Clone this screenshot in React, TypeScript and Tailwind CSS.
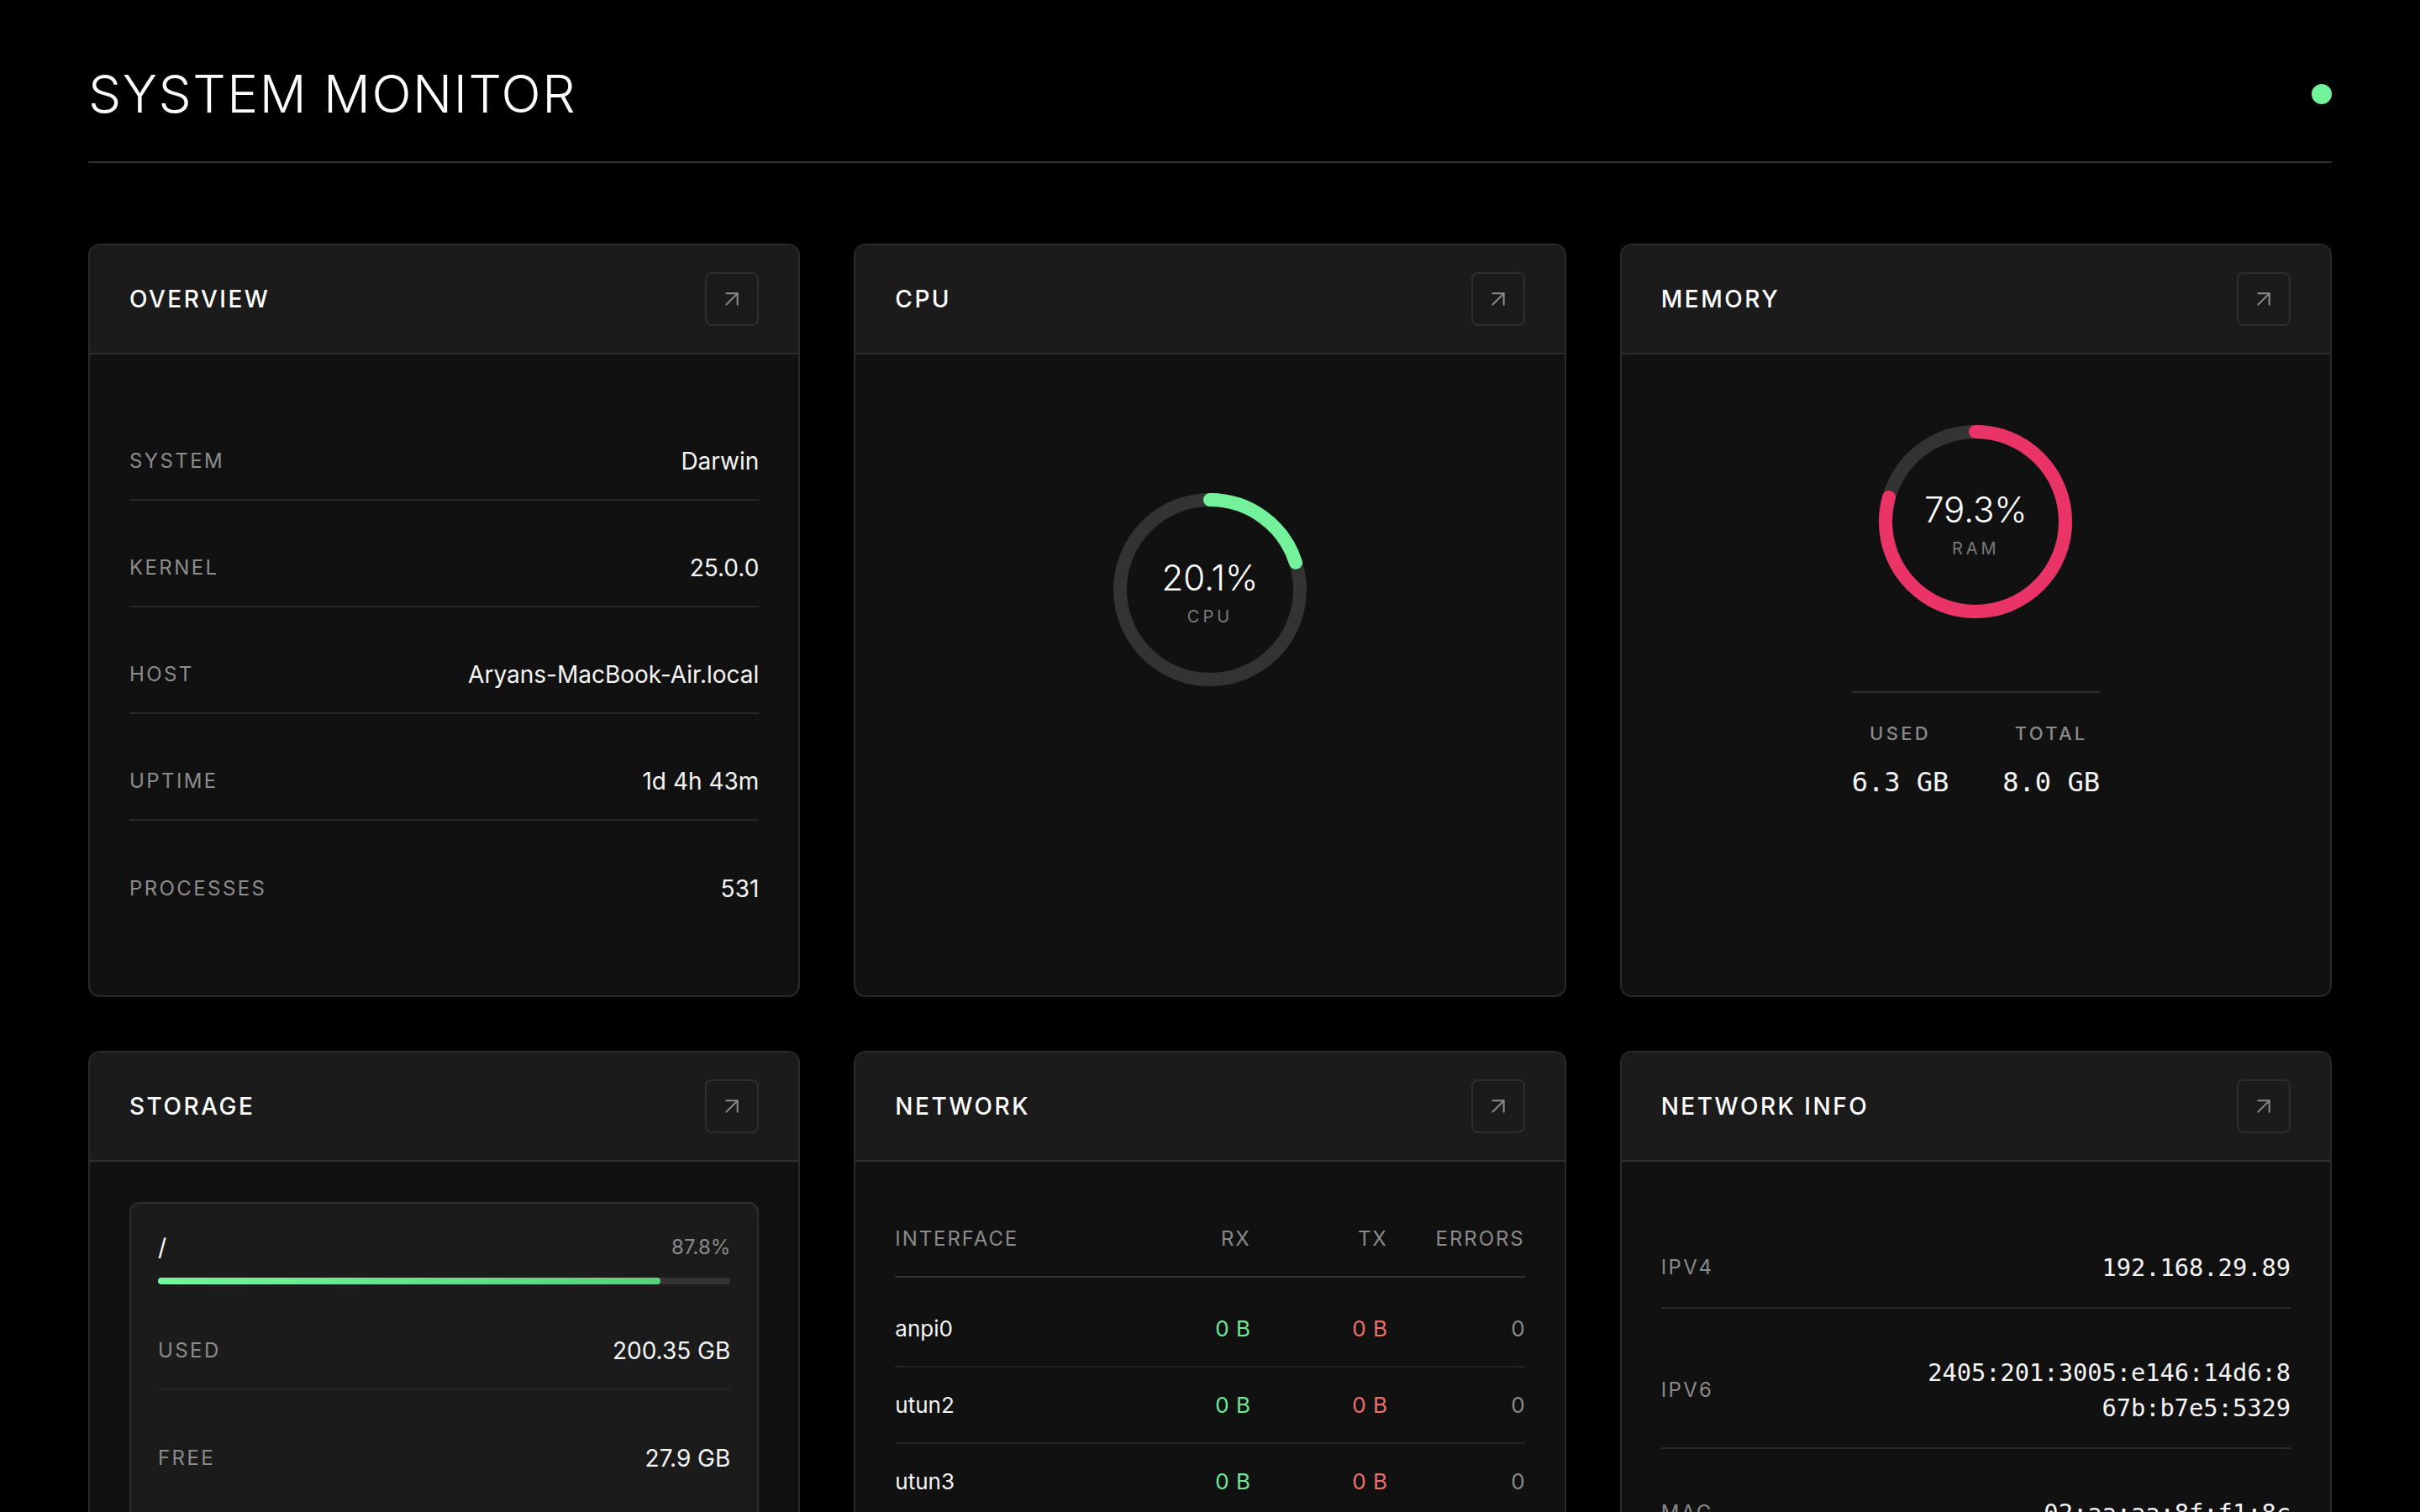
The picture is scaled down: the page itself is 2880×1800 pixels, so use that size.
import React from "react";
import { ArrowUpRight } from "lucide-react";

const SANS = "font-['Inter','Noto_Sans','Liberation_Sans',sans-serif]";
const MONO = "font-['DejaVu_Sans_Mono','Liberation_Mono',monospace]";

function Card({ title, children }: { title: string; children: React.ReactNode }) {
  return (
    <div className="flex flex-col rounded-[14px] border-2 border-[#2a2a2a] bg-[#111111] overflow-hidden">
      <div className="flex h-[130px] shrink-0 items-center justify-between border-b-2 border-[#2e2e2e] bg-[#1b1b1b] px-[47px]">
        <h2 className="text-[28px] font-medium tracking-[0.09em] text-white leading-[40px]">{title}</h2>
        <button className="flex h-16 w-16 items-center justify-center rounded-[8px] border-2 border-[#2e2e2e] bg-[#1b1b1b] text-[#8c8c8c]">
          <ArrowUpRight size={32} strokeWidth={1.5} />
        </button>
      </div>
      {children}
    </div>
  );
}

function Gauge({ pct, label, color }: { pct: number; label: string; color: string }) {
  const size = 230;
  const sw = 16;
  const r = (size - sw) / 2;
  const c = 2 * Math.PI * r;
  return (
    <div className="relative h-[230px] w-[230px]">
      <svg width={size} height={size} viewBox={`0 0 ${size} ${size}`}>
        <circle cx={size / 2} cy={size / 2} r={r} fill="none" stroke="#333333" strokeWidth={sw} />
        <circle
          cx={size / 2}
          cy={size / 2}
          r={r}
          fill="none"
          stroke={color}
          strokeWidth={sw}
          strokeLinecap="round"
          strokeDasharray={`${(c * pct) / 100} ${c}`}
          transform={`rotate(-90 ${size / 2} ${size / 2})`}
        />
      </svg>
      <div className="absolute inset-0 flex flex-col items-center justify-center pt-[6px]">
        <div className="text-[42px] font-light leading-[48px] text-white">{pct.toFixed(1)}%</div>
        <div className="mt-[10px] text-[20px] leading-[24px] tracking-[0.2em] text-[#7a7a7a]">{label}</div>
      </div>
    </div>
  );
}

function KV({ k, v, last = false }: { k: string; v: string; last?: boolean }) {
  return (
    <div className={`flex h-[92px] items-center justify-between ${last ? "" : "border-b-2 border-[#262626]"}`}>
      <span className="text-[24px] leading-[40px] tracking-[0.1em] text-[#8c8c8c]">{k}</span>
      <span className="text-[28px] leading-[40px] text-[#f5f5f5]">{v}</span>
    </div>
  );
}

const nets = [
  { n: "anpi0", rx: "0 B", tx: "0 B", e: "0" },
  { n: "utun2", rx: "0 B", tx: "0 B", e: "0" },
  { n: "utun3", rx: "0 B", tx: "0 B", e: "0" },
  { n: "utun0", rx: "0 B", tx: "0 B", e: "0" },
  { n: "en0", rx: "1.2 GB", tx: "210 MB", e: "0" },
];

export default function App() {
  return (
    <div className={`${SANS} min-h-screen bg-black px-[105px] pb-[120px] text-white`}>
      <header className="flex items-center justify-between border-b-2 border-[#333333] pt-[81px] pb-[49px]">
        <h1 className="text-[62px] font-light leading-[62px] tracking-[0.025em] text-white">SYSTEM MONITOR</h1>
        <span className="h-6 w-6 rounded-full bg-[#72f29b]" />
      </header>

      <main className="mt-[96px] grid grid-cols-3 gap-x-[64px] gap-y-[64px]">
        <Card title="OVERVIEW">
          <div className="flex flex-col gap-[35px] px-[47px] pt-[82px] pb-[81px]">
            <KV k="SYSTEM" v="Darwin" />
            <KV k="KERNEL" v="25.0.0" />
            <KV k="HOST" v="Aryans-MacBook-Air.local" />
            <KV k="UPTIME" v="1d 4h 43m" />
            <KV k="PROCESSES" v="531" last />
          </div>
        </Card>

        <Card title="CPU">
          <div className="flex justify-center pt-[165px]">
            <Gauge pct={20.1} label="CPU" color="#74f29b" />
          </div>
        </Card>

        <Card title="MEMORY">
          <div className="flex flex-col items-center pt-[84px]">
            <Gauge pct={79.3} label="RAM" color="#ea3468" />
            <div className="mt-[87px] flex gap-[64px] border-t-2 border-[#2e2e2e] pt-[32px]">
              <div className="flex flex-col items-center">
                <span className="text-[22px] font-medium leading-[32px] tracking-[0.15em] text-[#8a8a8a]">USED</span>
                <span className={`${MONO} mt-[22px] text-[32px] leading-[40px] text-[#f5f5f5]`}>6.3 GB</span>
              </div>
              <div className="flex flex-col items-center">
                <span className="text-[22px] font-medium leading-[32px] tracking-[0.15em] text-[#8a8a8a]">TOTAL</span>
                <span className={`${MONO} mt-[22px] text-[32px] leading-[40px] text-[#f5f5f5]`}>8.0 GB</span>
              </div>
            </div>
          </div>
        </Card>

        <Card title="STORAGE">
          <div className="px-[47px] pt-[48px] pb-[48px]">
            <div className="rounded-[12px] border-2 border-[#2e2e2e] bg-[#1b1b1b] p-[32px]">
              <div className="flex items-center justify-between">
                <span className="text-[28px] leading-[40px] text-white">/</span>
                <span className="text-[24px] leading-[40px] text-[#8a8a8a]">87.8%</span>
              </div>
              <div className="mt-[16px] h-[8px] w-full rounded-full bg-[#333333]">
                <div
                  className="h-full rounded-full bg-gradient-to-r from-[#76f59d] to-[#5ccf7c]"
                  style={{ width: "87.8%" }}
                />
              </div>
              <div className="mt-[34px] flex flex-col gap-[35px]">
                <KV k="USED" v="200.35 GB" />
                <KV k="FREE" v="27.9 GB" last />
              </div>
            </div>
          </div>
        </Card>

        <Card title="NETWORK">
          <div className="px-[47px] pt-[48px] pb-[48px]">
            <div className="grid grid-cols-[1fr_163px_163px_163px] border-b-2 border-[#333333] py-[24px] text-[24px] leading-[40px] tracking-[0.08em] text-[#8a8a8a]">
              <span>INTERFACE</span>
              <span className="text-right">RX</span>
              <span className="text-right">TX</span>
              <span className="text-right">ERRORS</span>
            </div>
            <div className="pt-[16px]">
              {nets.map((r) => (
                <div
                  key={r.n}
                  className="grid h-[91px] grid-cols-[1fr_163px_163px_163px] items-center border-b-2 border-[#222222] text-[26px] leading-[40px]"
                >
                  <span className="text-[#f5f5f5]">{r.n}</span>
                  <span className="text-right tracking-[0.02em] text-[#6ee89a]">{r.rx}</span>
                  <span className="text-right tracking-[0.02em] text-[#ef6f6c]">{r.tx}</span>
                  <span className="text-right text-[#8a8a8a]">{r.e}</span>
                </div>
              ))}
            </div>
          </div>
        </Card>

        <Card title="NETWORK INFO">
          <div className="flex flex-col gap-[29px] px-[47px] pt-[79px] pb-[48px]">
            <div className="flex items-center justify-between border-b-2 border-[#2a2a2a] py-[26px]">
              <span className="text-[24px] leading-[40px] tracking-[0.1em] text-[#8a8a8a]">IPV4</span>
              <span className={`${MONO} text-[28.7px] leading-[42px] text-[#f5f5f5]`}>192.168.29.89</span>
            </div>
            <div className="flex items-center justify-between border-b-2 border-[#2a2a2a] py-[26px]">
              <span className="text-[24px] leading-[40px] tracking-[0.1em] text-[#8a8a8a]">IPV6</span>
              <span className={`${MONO} max-w-[445px] break-all text-right text-[28.7px] leading-[42px] text-[#f5f5f5]`}>
                2405:201:3005:e146:14d6:867b:b7e5:5329
              </span>
            </div>
            <div className="flex items-center justify-between border-b-2 border-[#2a2a2a] py-[26px]">
              <span className="text-[24px] leading-[40px] tracking-[0.1em] text-[#8a8a8a]">MAC</span>
              <span className={`${MONO} text-[28.7px] leading-[42px] text-[#f5f5f5]`}>02:aa:aa:8f:f1:8c</span>
            </div>
            <div className="flex items-center justify-between py-[26px]">
              <span className="text-[24px] leading-[40px] tracking-[0.1em] text-[#8a8a8a]">GATEWAY</span>
              <span className={`${MONO} text-[28.7px] leading-[42px] text-[#f5f5f5]`}>192.168.29.1</span>
            </div>
          </div>
        </Card>
      </main>
    </div>
  );
}
